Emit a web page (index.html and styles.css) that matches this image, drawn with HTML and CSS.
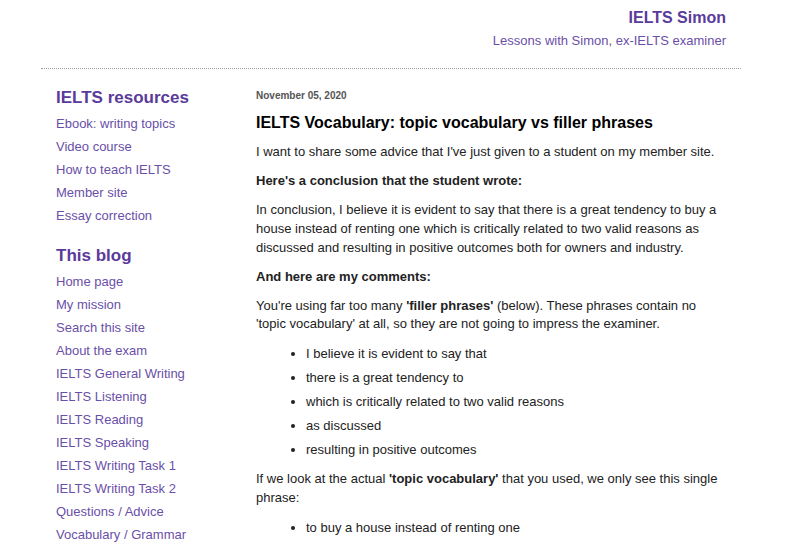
FILE: index.html
```html
<!DOCTYPE html>
<html>
<head>
<meta charset="utf-8">
<link rel="stylesheet" href="styles.css">
</head>
<body>
<div class="page">
  <header class="banner">
    <h1 class="site-title">IELTS Simon</h1>
    <p class="tagline">Lessons with Simon, ex-IELTS examiner</p>
  </header>
  <div class="columns">
    <aside class="sidebar">
      <h2 class="side-head">IELTS resources</h2>
      <ul class="side-list">
        <li><a href="#">Ebook: writing topics</a></li>
        <li><a href="#">Video course</a></li>
        <li><a href="#">How to teach IELTS</a></li>
        <li><a href="#">Member site</a></li>
        <li><a href="#">Essay correction</a></li>
      </ul>
      <h2 class="side-head">This blog</h2>
      <ul class="side-list">
        <li><a href="#">Home page</a></li>
        <li><a href="#">My mission</a></li>
        <li><a href="#">Search this site</a></li>
        <li><a href="#">About the exam</a></li>
        <li><a href="#">IELTS General Writing</a></li>
        <li><a href="#">IELTS Listening</a></li>
        <li><a href="#">IELTS Reading</a></li>
        <li><a href="#">IELTS Speaking</a></li>
        <li><a href="#">IELTS Writing Task 1</a></li>
        <li><a href="#">IELTS Writing Task 2</a></li>
        <li><a href="#">Questions / Advice</a></li>
        <li><a href="#">Vocabulary / Grammar</a></li>
      </ul>
    </aside>
    <main class="content">
      <p class="date">November 05, 2020</p>
      <h3 class="post-title">IELTS Vocabulary: topic vocabulary vs filler phrases</h3>
      <div class="post-body">
        <p>I want to share some advice that I've just given to a student on my member site.</p>
        <p><strong>Here's a conclusion that the student wrote:</strong></p>
        <p>In conclusion, I believe it is evident to say that there is a great tendency to buy a house instead of renting one which is critically related to two valid reasons as discussed and resulting in positive outcomes both for owners and industry.</p>
        <p><strong>And here are my comments:</strong></p>
        <p>You're using far too many <strong>'filler phrases'</strong> (below). These phrases contain no 'topic vocabulary' at all, so they are not going to impress the examiner.</p>
        <ul class="bullets">
          <li>I believe it is evident to say that</li>
          <li>there is a great tendency to</li>
          <li>which is critically related to two valid reasons</li>
          <li>as discussed</li>
          <li>resulting in positive outcomes</li>
        </ul>
        <p>If we look at the actual <strong>'topic vocabulary'</strong> that you used, we only see this single phrase:</p>
        <ul class="bullets">
          <li>to buy a house instead of renting one</li>
        </ul>
      </div>
    </main>
  </div>
</div>
</body>
</html>
```
FILE: styles.css
```css
html, body {
  margin: 0;
  padding: 0;
  background: #fff;
}
body {
  font-family: "Liberation Sans", Arial, sans-serif;
  font-size: 13px;
  color: #222;
}
.page {
  width: 700px;
  margin-left: 41px;
}
.banner {
  text-align: right;
  padding: 8px 15px 18px 0;
  border-bottom: 1px dotted #999;
}
.site-title {
  margin: 0;
  font-size: 16px;
  font-weight: bold;
  color: #5a3a9a;
  line-height: 20px;
}
.tagline {
  margin: 4px 0 0;
  font-size: 13px;
  line-height: 18px;
  color: #6a4fa8;
}
.columns {
  display: flex;
  padding-top: 18px;
}
.sidebar {
  width: 200px;
  padding-left: 15px;
  flex: none;
}
.content {
  flex: 1;
  padding-right: 15px;
}
.side-head {
  margin: 0 0 3px;
  font-size: 17px;
  line-height: 22px;
  font-weight: bold;
  color: #5a3a9a;
}
.side-list {
  list-style: none;
  margin: 0 0 18px;
  padding: 0;
}
.side-list li {
  line-height: 23px;
}
.side-list a {
  color: #6a4fa8;
  text-decoration: none;
}
.date {
  margin: 2px 0 0;
  font-size: 10px;
  line-height: 14px;
  font-weight: bold;
  color: #555;
}
.post-title {
  margin: 10px 0 0;
  font-size: 16px;
  line-height: 20px;
  font-weight: bold;
  color: #000;
}
.post-body p {
  margin: 10.3px 0 0;
  line-height: 18.7px;
}
.bullets {
  margin: 11px 0 0;
  padding-left: 50px;
}
.bullets li {
  line-height: 18.7px;
  margin-bottom: 5.3px;
}
```
